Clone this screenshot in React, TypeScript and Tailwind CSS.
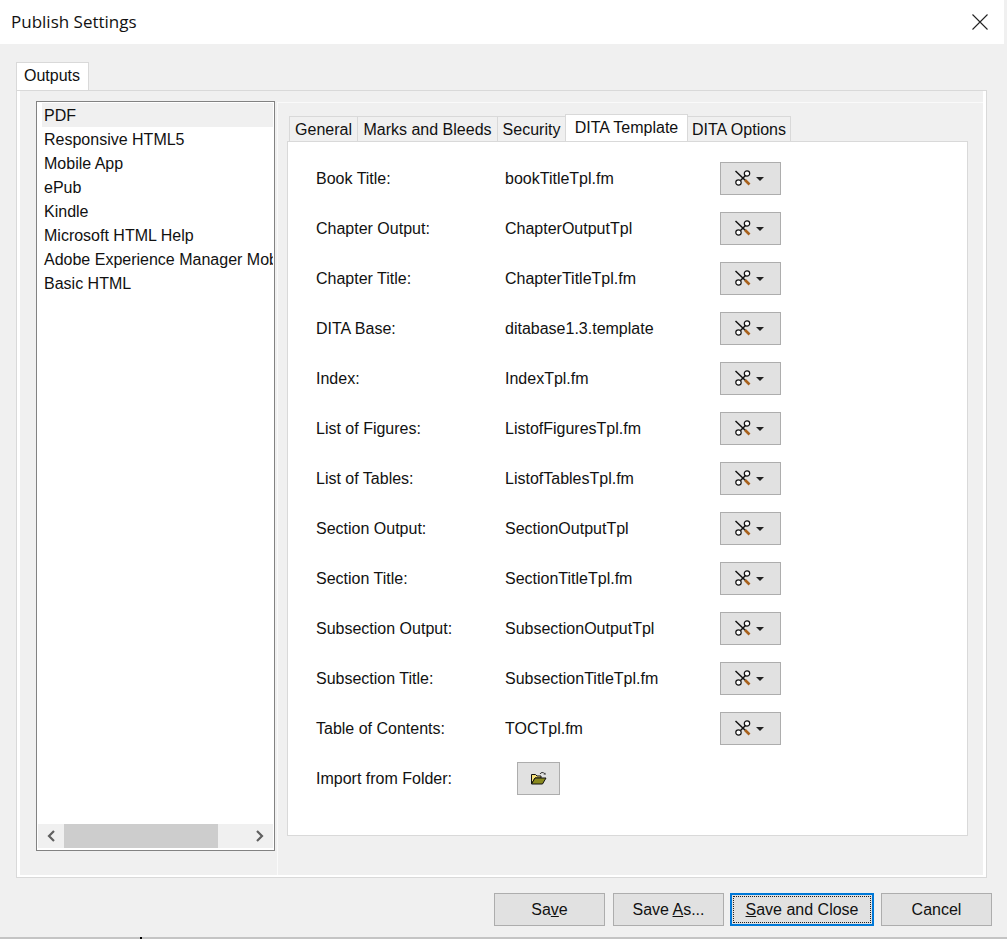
const outputs = [
  "PDF",
  "Responsive HTML5",
  "Mobile App",
  "ePub",
  "Kindle",
  "Microsoft HTML Help",
  "Adobe Experience Manager Mobile",
  "Basic HTML",
];

const tabs = [
  { name: "General", width: "w-[69px]" },
  { name: "Marks and Bleeds", width: "w-[141px]" },
  { name: "Security", width: "w-[69px]" },
  { name: "DITA Template", width: "w-[123px]", active: true },
  { name: "DITA Options", width: "w-[104px]" },
];

const templates = [
  { label: "Book Title:", file: "bookTitleTpl.fm" },
  { label: "Chapter Output:", file: "ChapterOutputTpl" },
  { label: "Chapter Title:", file: "ChapterTitleTpl.fm" },
  { label: "DITA Base:", file: "ditabase1.3.template" },
  { label: "Index:", file: "IndexTpl.fm" },
  { label: "List of Figures:", file: "ListofFiguresTpl.fm" },
  { label: "List of Tables:", file: "ListofTablesTpl.fm" },
  { label: "Section Output:", file: "SectionOutputTpl" },
  { label: "Section Title:", file: "SectionTitleTpl.fm" },
  { label: "Subsection Output:", file: "SubsectionOutputTpl" },
  { label: "Subsection Title:", file: "SubsectionTitleTpl.fm" },
  { label: "Table of Contents:", file: "TOCTpl.fm" },
];

function ToolsIcon() {
  return (
    <svg width="18" height="18" viewBox="0 0 18 18" fill="none">
      <path d="M1.5 2L12 12" stroke="#111" strokeWidth="1.5" />
      <path d="M11.5 6.5L6.5 11.5" stroke="#111" strokeWidth="1.5" />
      <circle cx="13" cy="4.5" r="2.7" stroke="#111" strokeWidth="1.2" fill="#fff" />
      <circle cx="4.5" cy="13.5" r="2.7" stroke="#111" strokeWidth="1.2" fill="#fff" />
      <path d="M11 11L15.5 15.5" stroke="#a8611c" strokeWidth="2.6" />
    </svg>
  );
}

function FolderIcon() {
  return (
    <svg width="16" height="14" viewBox="0 0 16 14" fill="none">
      <path d="M9 3C10 1.2 12 1 13.5 2.5" stroke="#333" strokeWidth="1" />
      <path d="M12.5 3.5L15 3.5L14 1.5Z" fill="#333" />
      <path d="M0.5 3.5H4.5L6 5H10V7H4L0.5 13Z" fill="#f7e27a" stroke="#111" strokeWidth="1" />
      <path d="M4 7H15L11.5 13H0.5Z" fill="#8a8a1e" stroke="#111" strokeWidth="1" />
    </svg>
  );
}

function ToolButton() {
  return (
    <button className="w-[61px] h-[33px] bg-[#e1e1e1] border border-[#adadad] flex items-center justify-center gap-[4px] pr-[4px]">
      <ToolsIcon />
      <span className="w-0 h-0 mt-px border-x-[4px] border-x-transparent border-t-[4px] border-t-[#222]" />
    </button>
  );
}

function Scrollbar() {
  return (
    <div className="h-[24px] mx-px bg-[#f0f0f0] flex items-center">
      <div className="w-[26px] flex justify-center">
        <svg width="10" height="12" viewBox="0 0 10 12" fill="none">
          <path d="M8 1L3 6L8 11" stroke="#606060" strokeWidth="2.2" />
        </svg>
      </div>
      <div className="w-[154px] h-full bg-[#cdcdcd]" />
      <div className="flex-1 flex justify-end pr-[8px]">
        <svg width="10" height="12" viewBox="0 0 10 12" fill="none">
          <path d="M2 1L7 6L2 11" stroke="#606060" strokeWidth="2.2" />
        </svg>
      </div>
    </div>
  );
}

export default function App() {
  return (
    <div
      className="w-[1007px] h-[939px] bg-[#f0f0f0] flex flex-col overflow-hidden text-[16px] text-[#111]"
      style={{ fontFamily: '"Liberation Sans", Arial, sans-serif' }}
    >
      <header className="h-[44px] mr-[3px] bg-white flex items-center justify-between pl-[11px] pr-[16px]">
        <span className="text-[17px]" style={{ fontFamily: '"Open Sans", sans-serif' }}>
          Publish Settings
        </span>
        <svg width="16" height="16" viewBox="0 0 16 16" fill="none" className="mb-px">
          <path d="M0.5 0.5L15.5 15.5M15.5 0.5L0.5 15.5" stroke="#222" strokeWidth="1.1" />
        </svg>
      </header>

      <main className="flex-1 pl-[16px] pr-[20px] pt-[18px] flex flex-col">
        <div className="h-[28px] w-[73px] bg-white border border-b-0 border-[#d9d9d9] pl-[7px] pb-[2px] flex items-center">
          Outputs
        </div>
        <div className="h-[788px] border border-[#d9d9d9] flex bg-[#f0f0f0]">
          <div className="flex-1 flex border-l-[3px] border-r-[3px] border-b-[2px] border-white">
            <div className="pl-[16px] pt-[10px]">
              <div className="w-[239px] h-[750px] bg-white border border-[#828282] flex flex-col pb-[2px]">
                <ul className="flex-1 pl-[5px] pr-px pt-px">
                  {outputs.map((item, i) => (
                    <li
                      key={item}
                      className={`h-[24px] pl-[2px] leading-[26px] whitespace-nowrap overflow-hidden ${
                        i === 0 ? "bg-[#f0f0f0]" : ""
                      }`}
                    >
                      {item}
                    </li>
                  ))}
                </ul>
                <Scrollbar />
              </div>
            </div>

            <div className="flex-1 ml-[2px] mt-[11px] border-l border-t border-[#fafafa] pl-[9px] pt-[10px]">
              <div className="flex items-end h-[28px] pl-[2px]">
                {tabs.map((tab) => (
                  <div
                    key={tab.name}
                    className={`${tab.width} flex items-center justify-center whitespace-nowrap border border-b-0 border-[#d9d9d9] -ml-px first:ml-0 ${
                      tab.active ? "h-[27px] bg-white" : "h-[25px] pt-[2px] bg-[#f0f0f0]"
                    }`}
                  >
                    {tab.name}
                  </div>
                ))}
              </div>
              <div className="w-[681px] h-[695px] bg-white border border-[#d9d9d9] pt-[11px] pl-[28px]">
                {templates.map((row) => (
                  <div key={row.label} className="h-[50px] flex items-center">
                    <span className="w-[189px] pt-[1px]">{row.label}</span>
                    <span className="w-[215px] pt-[1px]">{row.file}</span>
                    <ToolButton />
                  </div>
                ))}
                <div className="h-[50px] flex items-center">
                  <span className="w-[201px] pt-[1px]">Import from Folder:</span>
                  <button className="w-[43px] h-[33px] bg-[#e1e1e1] border border-[#adadad] flex items-center justify-center">
                    <FolderIcon />
                  </button>
                </div>
              </div>
            </div>
          </div>
        </div>
      </main>

      <footer className="h-[59px] pt-[15px] pr-[15px] flex justify-end items-start">
        <button className="w-[111px] h-[33px] bg-[#e1e1e1] border border-[#adadad]">
          Sa<span className="underline">v</span>e
        </button>
        <button className="w-[111px] h-[33px] ml-[8px] bg-[#e1e1e1] border border-[#adadad]">
          Save <span className="underline">A</span>s...
        </button>
        <button className="w-[144px] h-[33px] ml-[6px] bg-[#e1e1e1] border-2 border-[#0078d7] p-px">
          <span className="flex items-center justify-center w-full h-full border border-dotted border-[#222]">
            <span>
              <span className="underline">S</span>ave and Close
            </span>
          </span>
        </button>
        <button className="w-[111px] h-[33px] ml-[7px] bg-[#e1e1e1] border border-[#adadad]">
          Cancel
        </button>
      </footer>
      <div className="h-[2px] bg-[#c4c4c4] flex shrink-0">
        <div className="ml-[140px] w-[2px] h-full bg-black" />
      </div>
    </div>
  );
}
